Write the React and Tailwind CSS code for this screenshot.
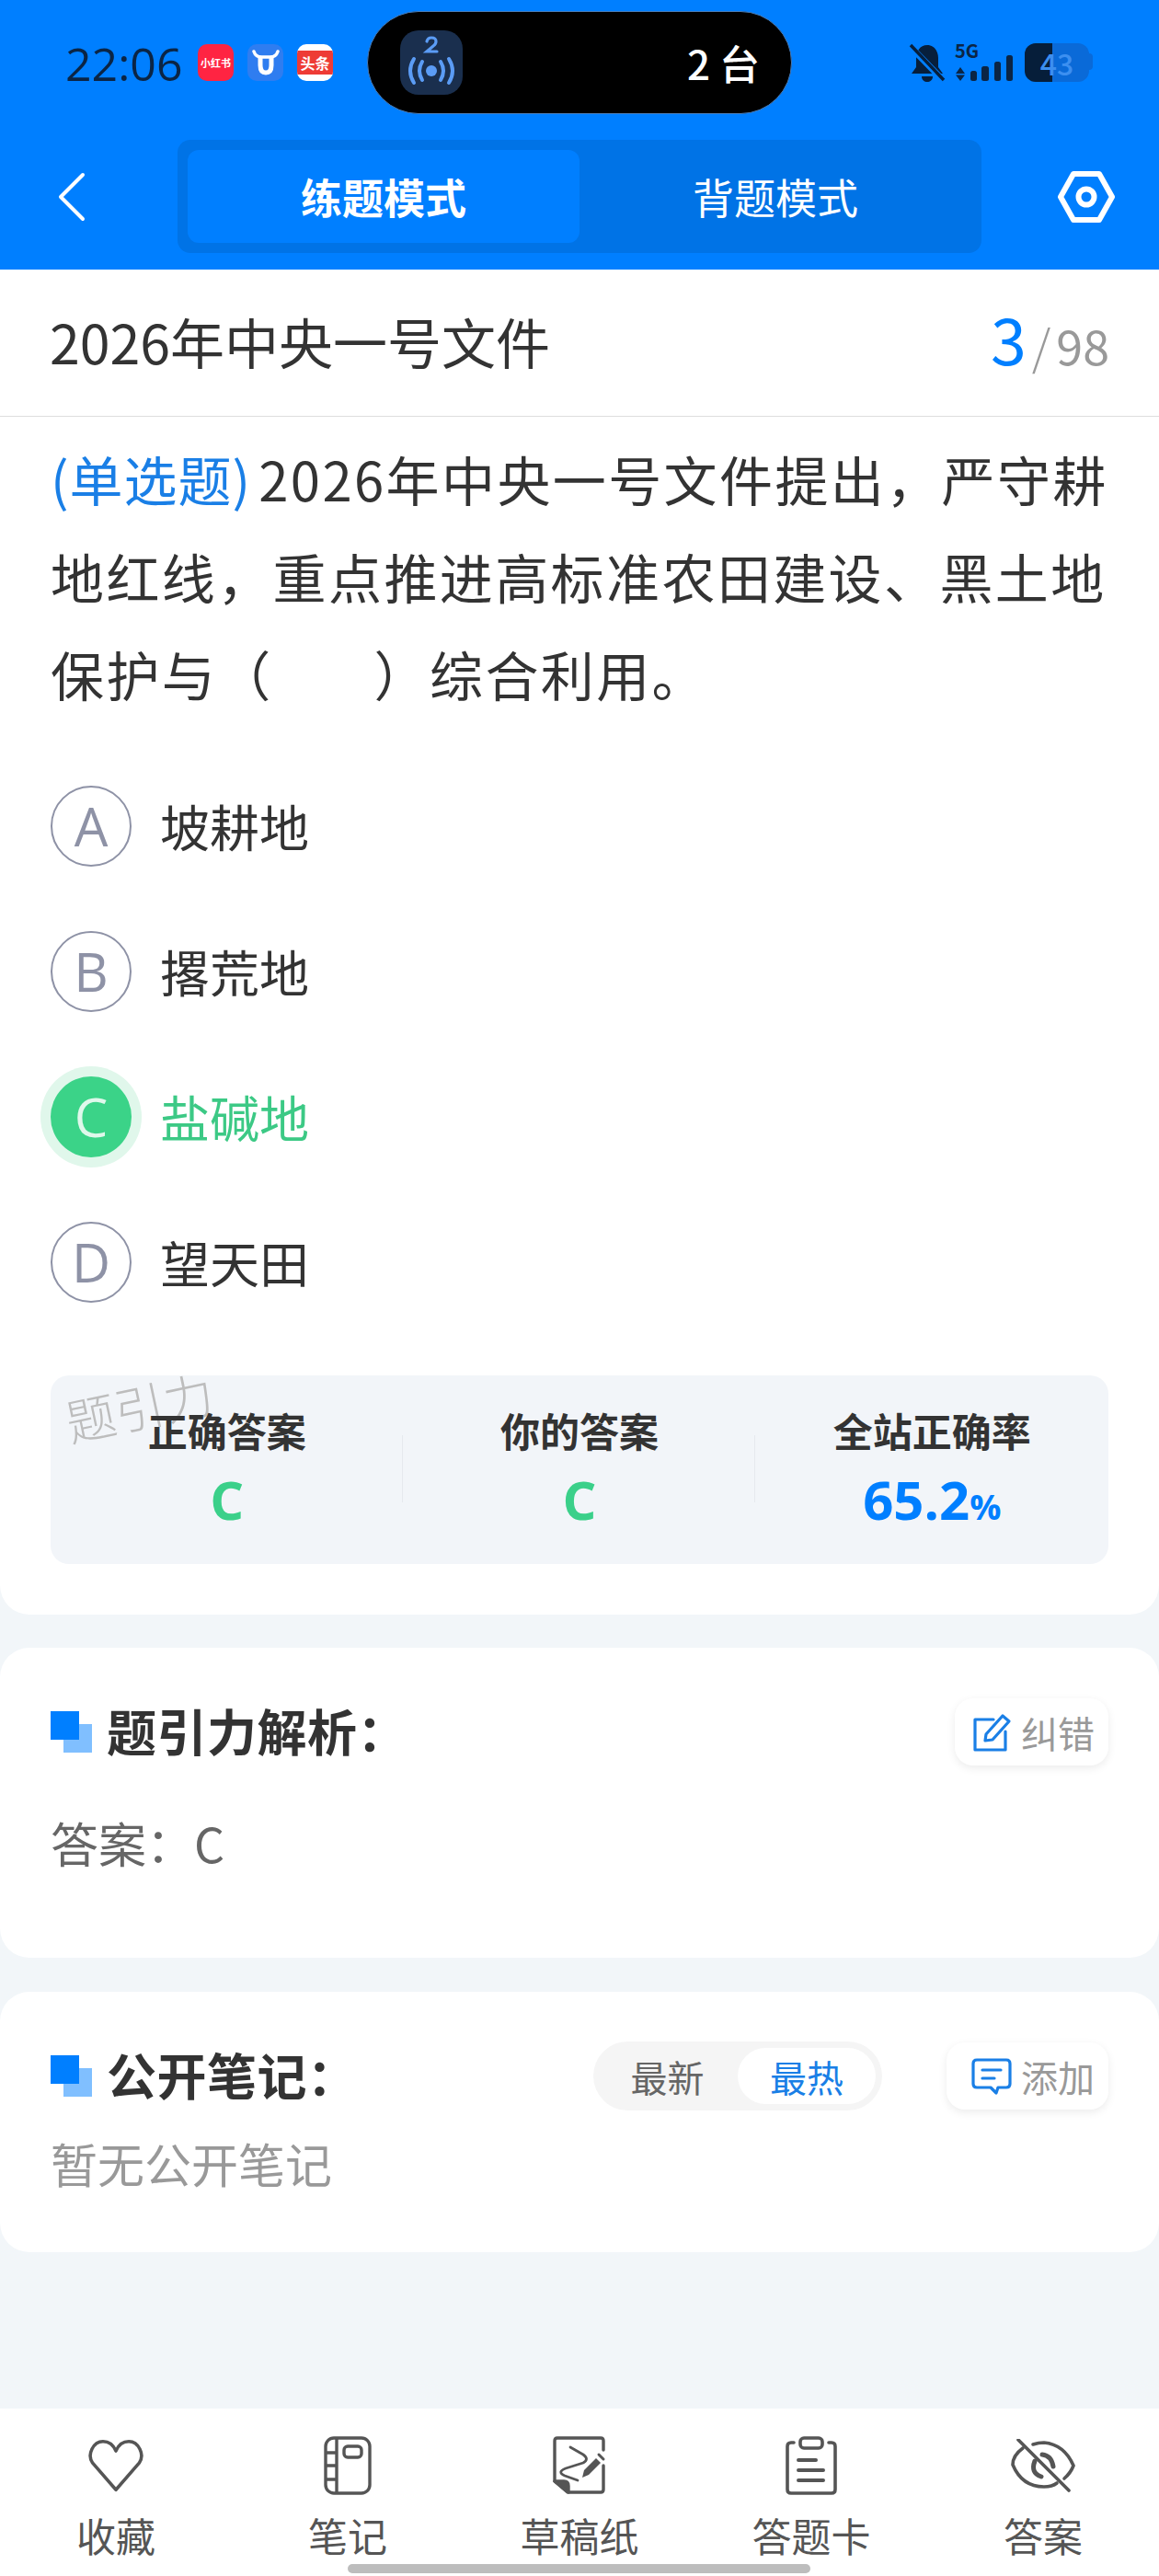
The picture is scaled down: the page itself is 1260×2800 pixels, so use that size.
import React from "react";

const F = { fontFamily: '"Noto Sans CJK SC","Noto Sans",sans-serif' };
const L = { fontFamily: '"Open Sans",sans-serif' };

function Back() {
  return (
    <svg width="32" height="54" viewBox="0 0 32 54" fill="none" stroke="#fff" strokeWidth="4" strokeLinecap="round" strokeLinejoin="round">
      <path d="M28 3 L4 27 L28 51" />
    </svg>
  );
}
function Hex() {
  return (
    <svg width="62" height="56" viewBox="0 0 62 56" fill="none" stroke="#fff" strokeWidth="6" strokeLinejoin="round">
      <path d="M17 3 H45 L59 28 L45 53 H17 L3 28 Z" />
      <circle cx="31" cy="28" r="8.5" />
    </svg>
  );
}
function Broadcast() {
  return (
    <svg width="68" height="70" viewBox="0 0 68 70" fill="none" stroke="#5b9cf5" strokeWidth="4" strokeLinecap="round">
      <circle cx="34" cy="44" r="6" fill="#5b9cf5" stroke="none" />
      <path d="M24 34 Q18 44 24 54" />
      <path d="M44 34 Q50 44 44 54" />
      <path d="M15 31 Q7 44 15 57" />
      <path d="M53 31 Q61 44 53 57" />
      <path d="M29 12 Q30 8 34 8 Q39 8 39 12 Q39 15 36 17 L29 23 H40" strokeWidth="3.2" />
    </svg>
  );
}
function BellOff() {
  return (
    <svg width="40" height="44" viewBox="0 0 40 44" fill="#071f3c">
      <path d="M20 2 C12 2 8 9 8 16 V26 L3 33 H37 L32 26 V16 C32 9 28 2 20 2 Z" />
      <path d="M14 36 H26 C26 40 23 42 20 42 C17 42 14 40 14 36 Z" />
      <path d="M1 3 L38 41" stroke="#007fff" strokeWidth="7" />
      <path d="M2 2 L38 40" stroke="#071f3c" strokeWidth="3.5" />
    </svg>
  );
}
function Signal() {
  return (
    <svg width="66" height="44" viewBox="0 0 66 44" fill="#0b2545" className="overflow-visible">
      <text x="0" y="16" fontSize="20" fontWeight="700" style={F}>5G</text>
      <path d="M6 26 L11 33 H1 Z M6 41 L1 34.5 H11 Z" />
      <rect x="17" y="30" width="7" height="11" rx="2.5" />
      <rect x="29" y="25" width="8" height="16" rx="2.5" />
      <rect x="43" y="20" width="7" height="21" rx="2.5" />
      <rect x="56" y="13" width="7" height="28" rx="2.5" />
    </svg>
  );
}
function PencilBox() {
  return (
    <svg width="42" height="42" viewBox="0 0 42 42" fill="none" stroke="#1a7fe6" strokeWidth="3.2" strokeLinecap="round" strokeLinejoin="round">
      <path d="M22 7 H2 V40 H35 V20" />
      <path d="M14 23 L32 3 L39 9 L21 29 L13 30 Z" />
    </svg>
  );
}
function Chat() {
  return (
    <svg width="44" height="40" viewBox="0 0 44 40" fill="none" stroke="#1a7fe6" strokeWidth="3.2" strokeLinecap="round" strokeLinejoin="round">
      <path d="M6 2 H38 Q42 2 42 6 V28 Q42 32 38 32 H29 L27 38 L21 32 H6 Q2 32 2 28 V6 Q2 2 6 2 Z" />
      <path d="M12 13 H32 M12 22 H25" />
    </svg>
  );
}
const nav = "#555555";
function Heart() {
  return (
    <svg width="64" height="60" viewBox="0 0 66 64" fill="none" stroke={nav} strokeWidth="3.8" strokeLinejoin="round">
      <path d="M33 60 L6 29 C-1 19 7 4 18 4 C25 4 30 8 33 15 C36 8 41 4 48 4 C59 4 67 19 60 29 Z" />
    </svg>
  );
}
function Notebook() {
  return (
    <svg width="52" height="64" viewBox="0 0 52 64" fill="none" stroke={nav} strokeWidth="3.4" strokeLinejoin="round">
      <rect x="2" y="2" width="48" height="60" rx="9" />
      <path d="M14 2 V62 M2 18 H14 M2 32 H14 M2 47 H14" />
      <rect x="22" y="11" width="19" height="12" rx="4" />
    </svg>
  );
}
function Draft() {
  return (
    <svg width="58" height="64" viewBox="0 0 58 64" fill="none" stroke={nav} strokeWidth="3.4" strokeLinejoin="round" strokeLinecap="round">
      <path d="M55 15 V5 Q55 2 52 2 H5 Q2 2 2 5 V49 L16 61 H52 Q55 61 55 58 V32" />
      <path d="M2 49 H12 Q17 49 17 54 V61 Z" fill={nav} />
      <path d="M19 12 L33 20 Q40 25 33 29 L14 35 Q4 39 13 43 L27 48" strokeWidth="2.8" fill="none" />
      <path d="M34 37 L47 24 L52 29 L39 42 L32 45 Z" fill={nav} stroke="none" />
      <path d="M50 20 L55 25" strokeWidth="3" />
    </svg>
  );
}
function Clip() {
  return (
    <svg width="56" height="64" viewBox="0 0 56 64" fill="none" stroke={nav} strokeWidth="3.6" strokeLinecap="round" strokeLinejoin="round">
      <path d="M9 7 H6 Q2 7 2 11 V58 Q2 62 6 62 H50 Q54 62 54 58 V11 Q54 7 50 7 H47" />
      <rect x="16" y="2" width="24" height="11" rx="4" />
      <path d="M14 26 H33 M14 37 H41 M14 48 H41" strokeWidth="4" />
    </svg>
  );
}
function EyeOff() {
  return (
    <svg width="70" height="58" viewBox="0 0 70 58" fill="none" stroke={nav} strokeWidth="3.6" strokeLinecap="round">
      <path d="M13 10 Q2 18 2 28 Q12 52 36 52 Q45 52 50 48" />
      <path d="M24 6 Q30 4 36 4 Q58 6 68 29 Q65 37 58 43" />
      <path d="M26 24 Q21 37 33 41" strokeWidth="5" />
      <path d="M34 17 Q44 18 46 30" strokeWidth="5" />
      <path d="M8 1 L63 56" />
    </svg>
  );
}

function Option({ letter, text, active }) {
  return (
    <div className="flex h-[158px] items-center">
      <div
        className={
          active
            ? "flex h-[88px] w-[88px] items-center justify-center rounded-full bg-[#3bd388] text-[58px] leading-none text-[#dff8eb] shadow-[0_0_0_11px_#e0f7eb]"
            : "flex h-[88px] w-[88px] items-center justify-center rounded-full border-[2.5px] border-[#8e92a6] text-[58px] leading-none text-[#8e92a6]"
        }
        style={L}
      >
        {letter}
      </div>
      <span className={"ml-[31px] text-[54px] leading-none " + (active ? "text-[#3cc985]" : "text-[#333333]")}>{text}</span>
    </div>
  );
}

function Stat({ label, children }) {
  return (
    <div className="flex flex-col items-center">
      <div className="text-[43px] font-bold leading-[60px] text-[#333333]">{label}</div>
      <div className="mt-[13px] text-[58px] font-bold leading-[60px]">{children}</div>
    </div>
  );
}

function Badge() {
  return (
    <div className="relative h-[45px] w-[45px] shrink-0">
      <div className="absolute left-[14px] top-[14px] h-[31px] w-[31px] bg-[#80bfff]" />
      <div className="absolute left-0 top-0 h-[31px] w-[31px] bg-[#007fff]" />
    </div>
  );
}

function SmallBtn({ icon, label, w }) {
  return (
    <div className={"flex h-[73px] items-center justify-end gap-[10px] rounded-[20px] bg-white pr-[15px] text-[40px] text-[#999999] shadow-[0_3px_10px_rgba(0,0,0,0.08)] " + w}>
      {icon}
      <span>{label}</span>
    </div>
  );
}

function NavItem({ icon, label }) {
  return (
    <div className="flex flex-1 flex-col items-center">
      <div className="flex h-[64px] items-center justify-center">{icon}</div>
      <div className="mt-[18px] text-[43px] leading-[50px] text-[#555555]">{label}</div>
    </div>
  );
}

export default function App() {
  return (
    <div className="relative flex h-[2800px] w-[1260px] flex-col overflow-hidden bg-[#f2f6f9]" style={F}>
      {/* Header */}
      <header className="flex h-[293px] shrink-0 flex-col bg-[#007fff]">
        <div className="flex h-[152px] items-start">
          <div className="ml-[71px] mt-[39px] w-[126px] text-[50px] font-medium leading-[60px] text-[#0b2545]" style={L}>22:06</div>
          <div className="ml-[18px] mt-[48px] flex gap-[15px]">
            <div className="flex h-[40px] w-[39px] items-center justify-center rounded-[10px] bg-[#ff2442] text-[11px] font-bold leading-none text-white">小红书</div>
            <div className="flex h-[40px] w-[39px] items-center justify-center rounded-[10px] bg-[#2f7df0]">
              <svg width="30" height="30" viewBox="0 0 30 30" fill="none" stroke="#fff" strokeLinecap="round">
                <path d="M9 10 V18 Q9 26 15 26 Q21 26 21 18 V10" strokeWidth="5" />
                <path d="M2 3 Q4 9 10 9 H20 Q26 9 28 3" strokeWidth="3.5" />
              </svg>
            </div>
            <div className="flex h-[40px] w-[39px] items-center overflow-hidden rounded-[10px] bg-white">
              <div className="flex h-[26px] w-full items-center justify-center bg-[#ee3b35] text-[16px] font-bold leading-none text-white">头条</div>
            </div>
          </div>
          <div className="ml-[37px] mt-[12px] flex h-[112px] w-[462px] items-center rounded-full border border-[#4a7db8] bg-black pl-[35px] pr-[34px]">
            <div className="flex h-[70px] w-[68px] items-center justify-center rounded-[20px] bg-[#1a2f4e]"><Broadcast /></div>
            <div className="ml-auto text-[44px] font-medium leading-none text-white">2 台</div>
          </div>
          <div className="ml-[127px] mt-[47px]"><BellOff /></div>
          <div className="ml-[10px] mt-[47px]"><Signal /></div>
          <div className="relative ml-[10px] mt-[47px] flex h-[42px] w-[70px] rounded-[12px] bg-[#0a6ad8]">
            <div className="h-full w-[30px] rounded-l-[12px] bg-[#061e3a]" />
            <div className="absolute inset-0 flex items-center justify-center text-[32px] font-medium leading-none text-[#3c8ff0]">43</div>
          </div>
          <div className="mt-[58px] h-[18px] w-[4px] rounded-r bg-[#0a6ad8]" />
        </div>
        <div className="flex h-[123px] items-center">
          <div className="ml-[62px] w-[131px]"><Back /></div>
          <div className="flex h-[123px] w-[874px] rounded-[14px] bg-[#0073e6] p-[11px]">
            <div className="flex flex-1 items-center justify-center rounded-[12px] bg-[#007fff] text-[45px] font-bold text-white">练题模式</div>
            <div className="flex flex-1 items-center justify-center text-[45px] text-white">背题模式</div>
          </div>
          <div className="ml-[83px]"><Hex /></div>
        </div>
      </header>

      <main className="min-h-0 flex-1">
        {/* Card 1 */}
        <section className="relative rounded-b-[32px] bg-white pb-[55px]">
          <div className="flex h-[160px] items-center justify-between border-b border-[#dddddd] px-[54px] pb-[5px]">
            <div className="text-[59px] leading-none text-[#333333]">2026年中央一号文件</div>
            <div className="flex items-baseline pb-[6px] text-[#999999]">
              <span className="text-[70px] leading-none text-[#007fff]">3</span>
              <span className="ml-[6px] text-[52px] font-light leading-none">/</span>
              <span className="ml-[6px] text-[52px] leading-none">98</span>
            </div>
          </div>
          <div className="px-[55px] pt-[14px] text-[58px] leading-[106px] tracking-[2.4px] text-[#333333]">
            <div className="whitespace-nowrap"><span className="mr-[8px] tracking-[1px] text-[#1a7fe6]">(单选题)</span>2026年中央一号文件提出，严守耕</div>
            <div className="whitespace-nowrap">地红线，重点推进高标准农田建设、黑土地</div>
            <div className="flex whitespace-nowrap">保护与（<span className="w-[110px]" />）综合利用。</div>
          </div>
          <div className="mt-[34px] px-[55px]">
            <Option letter="A" text="坡耕地" />
            <Option letter="B" text="撂荒地" />
            <Option letter="C" text="盐碱地" active />
            <Option letter="D" text="望天田" />
          </div>
          <div className="relative mx-[55px] mt-[44px] grid h-[205px] grid-cols-3 items-start rounded-[20px] bg-[#f2f5f9] pt-[29px]">
            <div className="absolute left-[17px] top-[20px] origin-left -rotate-[12deg] text-[54px] font-light leading-[60px] text-[#bdbdbd]">题引力</div>
            <div className="relative"><Stat label="正确答案"><span className="text-[#3bd08a]" style={L}>C</span></Stat></div>
            <div className="relative"><Stat label="你的答案"><span className="text-[#3bd08a]" style={L}>C</span></Stat></div>
            <Stat label="全站正确率">
              <span className="text-[#007fff]" style={L}>65.2<span className="text-[38px]">%</span></span>
            </Stat>
            <div className="absolute left-[382px] top-[65px] h-[73px] w-px bg-[#e6e9ee]" />
            <div className="absolute left-[765px] top-[65px] h-[73px] w-px bg-[#e6e9ee]" />
          </div>
        </section>

        {/* Card 2 */}
        <section className="mt-[36px] h-[337px] rounded-[32px] bg-white px-[55px] pt-[55px]">
          <div className="flex h-[73px] items-center justify-between">
            <div className="flex items-center">
              <Badge />
              <span className="ml-[16px] pb-[5px] text-[54px] font-bold tracking-[0.5px] text-[#333333]">题引力解析：</span>
            </div>
            <SmallBtn icon={<PencilBox />} label="纠错" w="w-[167px]" />
          </div>
          <div className="mt-[44px] text-[52px] leading-[80px] text-[#666666]">答案：C</div>
        </section>

        {/* Card 3 */}
        <section className="mt-[37px] h-[283px] rounded-[32px] bg-white px-[55px] pt-[54px]">
          <div className="flex h-[75px] items-center">
            <Badge />
            <span className="ml-[16px] pb-[4px] text-[54px] font-bold tracking-[0.5px] text-[#333333]">公开笔记：</span>
            <div className="ml-auto flex h-[75px] w-[314px] items-center rounded-full bg-[#f5f5f5] pr-[7px] text-[40px]">
              <span className="flex-1 pl-[4px] text-center text-[#666666]">最新</span>
              <span className="flex h-[61px] w-[150px] items-center justify-center rounded-full bg-white text-[#1a7fe6]">最热</span>
            </div>
            <div className="ml-[70px]">
              <SmallBtn icon={<Chat />} label="添加" w="w-[176px]" />
            </div>
          </div>
          <div className="mt-[22px] text-[51px] leading-[70px] text-[#999999]">暂无公开笔记</div>
        </section>
      </main>

      {/* Bottom nav */}
      <nav className="relative flex h-[182px] shrink-0 bg-white pt-[30px]">
        <NavItem icon={<Heart />} label="收藏" />
        <NavItem icon={<Notebook />} label="笔记" />
        <NavItem icon={<Draft />} label="草稿纸" />
        <NavItem icon={<Clip />} label="答题卡" />
        <NavItem icon={<EyeOff />} label="答案" />
        <div className="absolute bottom-[3px] left-[378px] h-[10px] w-[503px] rounded-full bg-[#bdbdbd]" />
      </nav>
    </div>
  );
}
